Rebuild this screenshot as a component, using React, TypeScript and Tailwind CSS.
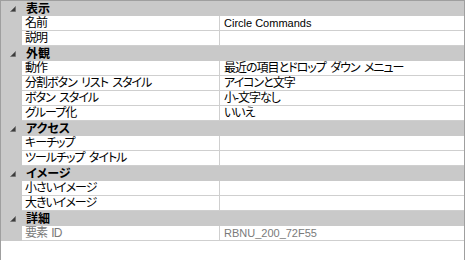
type Row = { name: string; value?: string; readOnly?: boolean };
type Section = { title: string; rows: Row[] };

const sections: Section[] = [
  { title: "表示", rows: [{ name: "名前", value: "Circle Commands" }, { name: "説明" }] },
  {
    title: "外観",
    rows: [
      { name: "動作", value: "最近の項目とドロップ ダウン メニュー" },
      { name: "分割ボタン リスト スタイル", value: "アイコンと文字" },
      { name: "ボタン スタイル", value: "小-文字なし" },
      { name: "グループ化", value: "いいえ" },
    ],
  },
  { title: "アクセス", rows: [{ name: "キーチップ" }, { name: "ツールチップ タイトル" }] },
  { title: "イメージ", rows: [{ name: "小さいイメージ" }, { name: "大きいイメージ" }] },
  { title: "詳細", rows: [{ name: "要素 ID", value: "RBNU_200_72F55", readOnly: true }] },
];

const isLatin = (s: string) => /^[\x20-\x7e]+$/.test(s);

function Arrow() {
  return (
    <svg width="22" height="15" viewBox="0 0 22 15" className="shrink-0">
      <polygon points="14.5,5.5 14.5,10.5 9.5,10.5" fill="#3c3c3c" stroke="#6a6a6a" strokeWidth="0.6" />
    </svg>
  );
}

function Cell({ text }: { text: string }) {
  return (
    <span
      className={`leading-none whitespace-nowrap ${
        isLatin(text) ? "text-[11px]" : "tracking-[-1px] [word-spacing:2px]"
      }`}
    >
      {text}
    </span>
  );
}

function PropRow({ row }: { row: Row }) {
  const color = row.readOnly ? "text-[#7a7a7a]" : "text-black";
  return (
    <div className="flex h-[15px]">
      <div className="w-[21px] shrink-0 bg-[#c9c9c9]" />
      <div className={`flex w-[197px] items-center border-b border-[#cfcfcf] bg-white pl-[3px] ${color}`}>
        <Cell text={row.name} />
      </div>
      <div className={`flex flex-1 items-center border-b border-l border-[#cfcfcf] bg-white pl-[4px] ${color}`}>
        {row.value ? <Cell text={row.value} /> : null}
      </div>
    </div>
  );
}

export default function App() {
  return (
    <div
      className="h-[260px] w-[466px] bg-white text-[12px] [font-feature-settings:'palt']"
      style={{ fontFamily: '"MS UI Gothic", "Liberation Sans", "Noto Sans CJK JP", sans-serif' }}
    >
      <div className="w-[465px] border-x border-t border-[#9f9f9f]">
        {sections.map((s) => (
          <div key={s.title}>
            <div className="flex h-[15px] items-center bg-[#c9c9c9]">
              <Arrow />
              <span className="pl-[3px] font-bold leading-none">{s.title}</span>
            </div>
            {s.rows.map((r) => (
              <PropRow key={r.name} row={r} />
            ))}
          </div>
        ))}
      </div>
      <div className="h-[19px] w-[465px] border-x border-[#9f9f9f]" />
    </div>
  );
}
